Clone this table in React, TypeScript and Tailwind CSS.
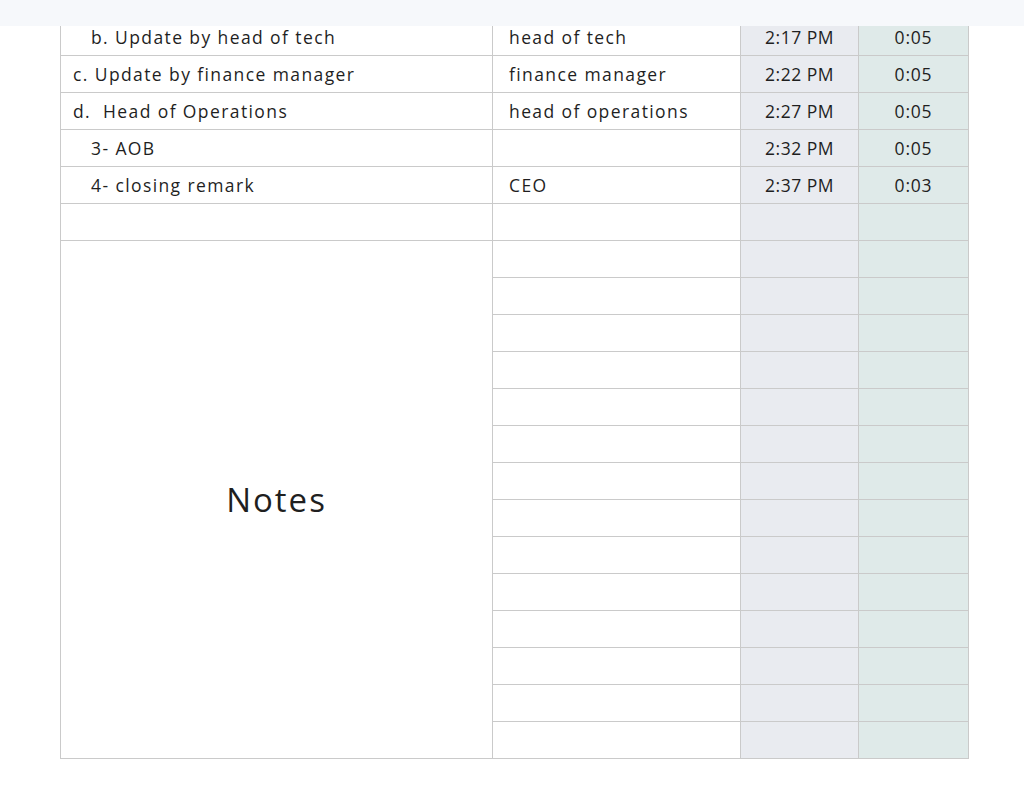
const rows = [
  { item: "b. Update by head of tech", indent: true, owner: "head of tech", start: "2:17 PM", dur: "0:05" },
  { item: "c. Update by finance manager", indent: false, owner: "finance manager", start: "2:22 PM", dur: "0:05" },
  { item: "d.\u00a0 Head of Operations", indent: false, owner: "head of operations", start: "2:27 PM", dur: "0:05" },
  { item: "3- AOB", indent: true, owner: "", start: "2:32 PM", dur: "0:05" },
  { item: "4- closing remark", indent: true, owner: "CEO", start: "2:37 PM", dur: "0:03" },
  { item: "", indent: false, owner: "", start: "", dur: "" },
];

const cell = "border-r border-b border-[#cacaca] flex items-center";

export default function App() {
  return (
    <div
      className="relative w-[1024px] h-[810px] bg-white overflow-hidden text-[#1f1f1f]"
      style={{ fontFamily: '"Open Sans", "Liberation Sans", sans-serif' }}
    >
      <div className="absolute top-0 left-0 right-0 h-[26px] bg-[#f6f8fb] z-10" />
      <div className="pt-[18px] pl-[60px]">
        <div className="grid grid-cols-[432px_248px_118px_110px] auto-rows-[37px] border-l border-t border-[#cacaca] w-[909px] text-[17.5px] tracking-[1.4px]">
          {rows.map((r, i) => (
            <div key={i} className="contents">
              <div className={`${cell} ${r.indent ? "pl-[30px]" : "pl-[12px]"}`}>{r.item}</div>
              <div className={`${cell} pl-[16px]`}>{r.owner}</div>
              <div className={`${cell} justify-center bg-[#e9ebf0] tracking-[0.5px]`}>{r.start}</div>
              <div className={`${cell} justify-center bg-[#dfeae9] tracking-[0.8px]`}>{r.dur}</div>
            </div>
          ))}
          <div className={`${cell} row-span-14 justify-center text-[33px] tracking-[2px]`}>Notes</div>
          {Array.from({ length: 14 }).map((_, i) => (
            <div key={i} className="contents">
              <div className={cell} />
              <div className={`${cell} bg-[#e9ebf0]`} />
              <div className={`${cell} bg-[#dfeae9]`} />
            </div>
          ))}
        </div>
      </div>
    </div>
  );
}
